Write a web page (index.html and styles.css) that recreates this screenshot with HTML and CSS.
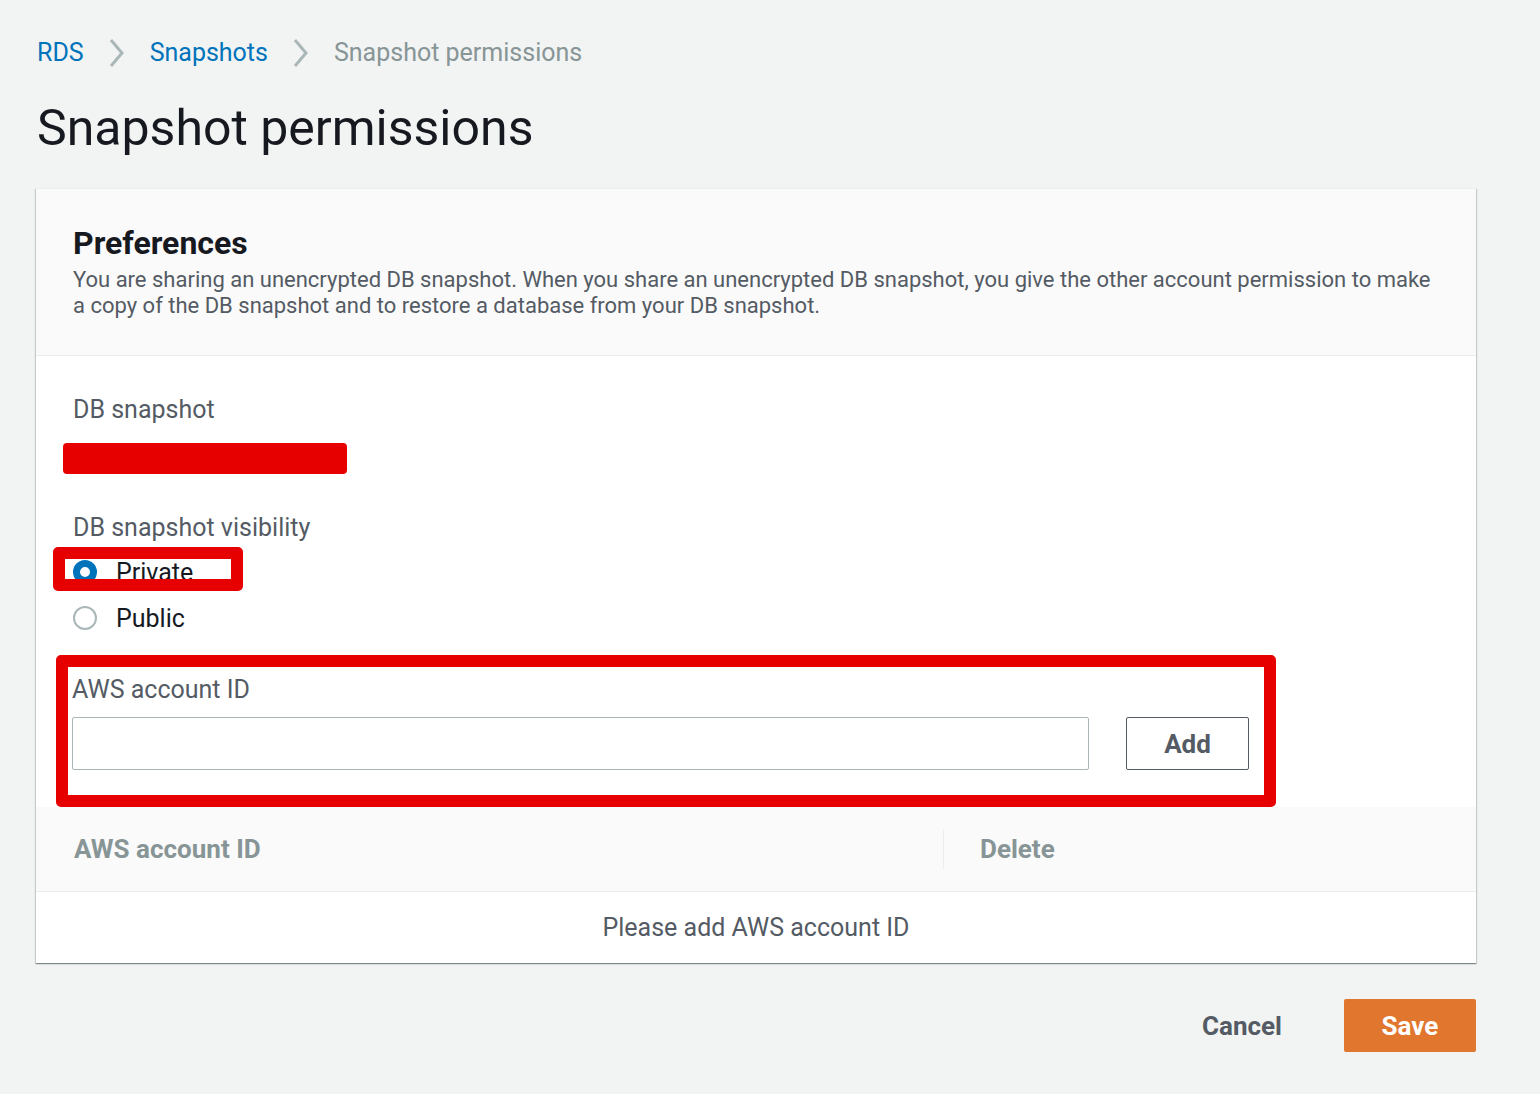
FILE: index.html
```html
<!DOCTYPE html>
<html lang="en">
<head>
<meta charset="utf-8">
<title>Snapshot permissions</title>
<link rel="stylesheet" href="styles.css">
</head>
<body>
<div class="page">
  <nav class="crumbs">
    <a class="crumb-link" href="#">RDS</a>
    <svg class="chev" width="16" height="30" viewBox="0 0 16 30"><path d="M2 2 L13 15 L2 28" fill="none" stroke="#aab7b8" stroke-width="3"/></svg>
    <a class="crumb-link" href="#">Snapshots</a>
    <svg class="chev" width="16" height="30" viewBox="0 0 16 30"><path d="M2 2 L13 15 L2 28" fill="none" stroke="#aab7b8" stroke-width="3"/></svg>
    <span class="crumb-current">Snapshot permissions</span>
  </nav>
  <h1 class="title">Snapshot permissions</h1>

  <section class="card">
    <header class="card-head">
      <h2 class="card-title">Preferences</h2>
      <p class="card-desc">You are sharing an unencrypted DB snapshot. When you share an unencrypted DB snapshot, you give the other account permission to make a copy of the DB snapshot and to restore a database from your DB snapshot.</p>
    </header>
    <div class="card-body">
      <div class="field">
        <div class="label">DB snapshot</div>
        <div class="redact"></div>
      </div>
      <div class="field field-vis">
        <div class="label">DB snapshot visibility</div>
        <div class="radios">
          <div class="radio">
            <span class="dot dot-on"></span><span class="radio-text">Private</span>
            <span class="mark mark-private"></span>
          </div>
          <div class="radio">
            <span class="dot"></span><span class="radio-text">Public</span>
          </div>
        </div>
      </div>
      <div class="account">
        <div class="mark mark-account"></div>
        <div class="label label-account">AWS account ID</div>
        <div class="account-row">
          <div class="input"></div>
          <button class="btn-add">Add</button>
        </div>
      </div>
    </div>
    <div class="table">
      <div class="thead">
        <div class="th th-id">AWS account ID</div>
        <div class="th th-del">Delete</div>
      </div>
      <div class="tempty">Please add AWS account ID</div>
    </div>
  </section>

  <div class="actions">
    <button class="btn-cancel">Cancel</button>
    <button class="btn-save">Save</button>
  </div>
</div>
</body>
</html>
```

FILE: styles.css
```css
* { box-sizing: border-box; }
html, body { margin: 0; padding: 0; }
body {
  background: #f2f3f3;
  font-family: Roboto, "Open Sans", Arial, sans-serif;
  color: #16191f;
  width: 1540px;
  height: 1094px;
  overflow: hidden;
}
.page { padding: 38px 64px 0 36px; }

.crumbs {
  display: flex;
  align-items: center;
  height: 30px;
  font-size: 25px;
  line-height: 30px;
  padding-left: 1px;
}
.crumb-link { color: #0073bb; text-decoration: none; }
.chev { margin: 0 25px 0 25px; display: block; }
.crumb-current { color: #879596; }

.title {
  margin: 30px 0 0 1px;
  font-size: 50px;
  line-height: 60px;
  font-weight: 400;
  color: #16191f;
}

.card {
  margin-top: 30px;
  width: 1440px;
  background: #fff;
  border-top: 1px solid #eaeded;
  box-shadow: 0 1px 1px 0 rgba(0,28,36,.3), 1px 1px 1px 0 rgba(0,28,36,.15), -1px 1px 1px 0 rgba(0,28,36,.15);
}
.card-head {
  background: #fafafa;
  padding: 37px 37px 36px 37px;
  border-bottom: 1px solid #eaeded;
}
.card-title {
  margin: 0;
  font-size: 32px;
  line-height: 34px;
  font-weight: 700;
  color: #16191f;
}
.card-desc {
  margin: 7px 0 0 0;
  font-size: 22px;
  line-height: 26px;
  color: #545b64;
}

.card-body { padding: 39px 37px 0 37px; }
.label {
  font-size: 25px;
  line-height: 30px;
  color: #545b64;
}
.redact {
  margin: 18px 0 0 -10px;
  width: 284px;
  height: 31px;
  background: #e60000;
  border-radius: 4px;
}
.field-vis { margin-top: 39px; }
.radios {
  display: flex;
  flex-direction: column;
  gap: 16px;
  margin-top: 14px;
}
.radio {
  position: relative;
  display: flex;
  align-items: center;
  height: 30px;
  font-size: 25px;
  color: #16191f;
}
.dot {
  width: 24px;
  height: 24px;
  border-radius: 50%;
  border: 2px solid #aab7b8;
  background: #fff;
  margin-right: 19px;
  flex: none;
}
.dot-on {
  border: 7px solid #0073bb;
}
.mark {
  position: absolute;
  border: 12px solid #e60000;
  border-radius: 5px;
  pointer-events: none;
}
.mark-private {
  left: -20px;
  top: -10px;
  width: 190px;
  height: 44px;
}
.account {
  position: relative;
  margin-top: 22px;
  padding: 20px 0 37px 0;
}
.mark-account {
  left: -17px;
  top: 0;
  width: 1220px;
  height: 152px;
}
.label-account { margin-left: -1px; }
.account-row {
  display: flex;
  gap: 37px;
  margin-top: 12px;
  margin-left: -1px;
}
.input {
  width: 1017px;
  height: 53px;
  border: 1px solid #aab7b8;
  border-radius: 2px;
  background: #fff;
}
.btn-add {
  width: 123px;
  height: 53px;
  border: 1px solid #545b64;
  border-radius: 2px;
  background: #fff;
  font-family: inherit;
  font-size: 26px;
  font-weight: 700;
  color: #545b64;
  padding: 0;
}

.thead {
  display: flex;
  align-items: center;
  height: 85px;
  background: #fafafa;
  border-bottom: 1px solid #eaeded;
}
.th {
  font-size: 26px;
  font-weight: 700;
  color: #879596;
  line-height: 30px;
}
.th-id { width: 907px; padding-left: 38px; }
.th-del {
  padding-left: 36px;
  border-left: 1px solid #eaeded;
  line-height: 40px;
}
.tempty {
  height: 71px;
  display: flex;
  align-items: center;
  justify-content: center;
  font-size: 25px;
  color: #545b64;
}

.actions {
  width: 1440px;
  display: flex;
  justify-content: flex-end;
  align-items: center;
  gap: 62px;
  margin-top: 36px;
}
.btn-cancel {
  background: none;
  border: none;
  padding: 0;
  font-family: inherit;
  font-size: 26px;
  font-weight: 700;
  color: #545b64;
}
.btn-save {
  width: 132px;
  height: 53px;
  background: #e1762f;
  border: none;
  border-radius: 2px;
  font-family: inherit;
  font-size: 26px;
  font-weight: 700;
  color: #fff;
  padding: 0;
}
```
